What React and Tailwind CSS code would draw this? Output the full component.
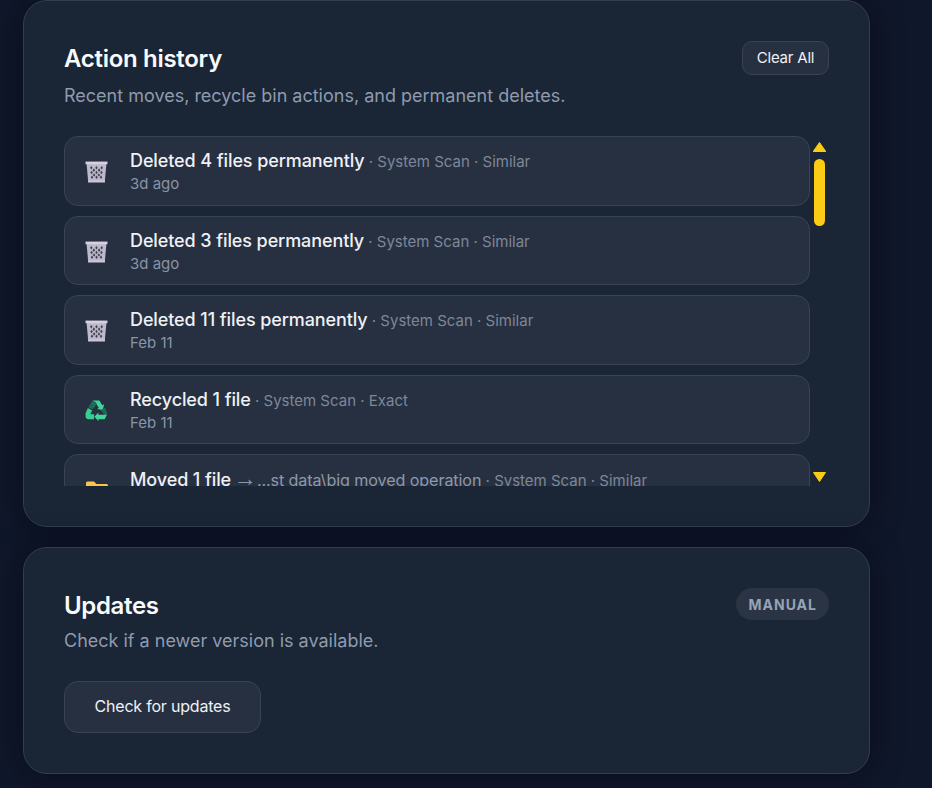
const font = { fontFamily: "Inter, 'Noto Sans', sans-serif" };

function Trash() {
  const holes = [[6, 7.5], [11, 7.5], [16, 7.5], [6.3, 12], [11, 12], [15.7, 12], [6.7, 16.5], [11, 16.5], [15.3, 16.5], [8.5, 9.7], [13.5, 9.7], [8.7, 14.3], [13.3, 14.3]];
  return (
    <svg width="23" height="23" viewBox="0 0 22 22" className="mt-[2px] mr-[1px] shrink-0">
      <path d="M1.500 3.500H20.500L19 20H3z" fill="#bdb8ca" />
      {holes.map(([x, y]) => (
        <path key={`${x}-${y}`} d={`M${x} ${y - 1.7}L${x + 1.2} ${y}L${x} ${y + 1.7}L${x - 1.2} ${y}z`} fill="#454254" />
      ))}
      <path d="M0.500 1.500H21.500V4H0.500z" fill="#d6d1e0" />
      <path d="M2.800 19.500H19.200L19 21.500H3z" fill="#cdc8d8" />
    </svg>
  );
}

function Recycle() {
  return (
    <svg width="23" height="23" viewBox="0 0 24 24" className="mt-[3px] mr-[1px] shrink-0">
      <path d="M8 1.500H15L18 6.500L20 5.500L18.500 11.500L12.500 10.500L14.500 9.500L11.500 4.500Z" fill="#3fd69a" />
      <path d="M8 1.500L11.500 3.500L12 5.500L8 11L3.500 8.500Z" fill="#1f6b5a" />
      <path d="M3 9.500L7.500 12L5.500 16H9.500V21H3.500Q1.500 21 0.700 19L0.500 15Z" fill="#37cf91" />
      <path d="M16.500 11.500L21 9L23.300 15.500L22 16.500H20Z" fill="#1f6b5a" />
      <path d="M14 16.500H23L20.500 21H14V23L9.800 18.500L14 14Z" fill="#3fd69a" />
    </svg>
  );
}

function Folder() {
  return (
    <svg width="24" height="24" viewBox="0 0 24 24" className="shrink-0">
      <path d="M1 6q0-1.500 1.500-1.500h6.500l2.500 2.500h10q1.500 0 1.500 1.500V20q0 1.500-1.500 1.500h-19Q1 21.500 1 20z" fill="#fcc44d" />
    </svg>
  );
}

function Row({ icon, title, extra, meta, when }) {
  return (
    <div className="flex h-[69.5px] shrink-0 items-center gap-[21px] rounded-[14px] border border-[#3a4354] bg-[#273040] pl-[20px] pr-4">
      {icon}
      <div className="min-w-0 pt-[1.5px]">
        <div className="whitespace-nowrap text-[18px] leading-[24px] font-medium tracking-[-0.1px] text-[#eef1f6]">
          {title}
          {extra && (
            <span className="text-[16.150px] font-normal text-[#8e98a9]">
              {" "}
              <span className="-ml-[2px] -mr-[4px] font-['Liberation_Sans'] text-[23px] leading-none">→</span> {extra}
            </span>
          )}
          <span className="text-[15px] font-normal tracking-[0px] text-[#7d8798]"> · {meta}</span>
        </div>
        <div className="text-[15px] leading-[20px] text-[#8994a7]">{when}</div>
      </div>
    </div>
  );
}

export default function App() {
  return (
    <div style={font} className="h-[788px] w-[932px] overflow-hidden bg-[#0f172a] pl-[23px]">
      <div className="flex w-[847px] flex-col gap-5">
        <section className="h-[527px] rounded-[24px] border border-[#333d4d] bg-[#1a2535] px-10 pt-10 shadow-[0_0_30px_rgba(5,8,18,0.55)]">
          <div className="flex items-start justify-between">
            <div>
              <h2 className="text-[24px] leading-[36px] font-semibold tracking-[-0.3px] text-[#f8fafc]">Action history</h2>
              <p className="mt-[6px] text-[18px] leading-[26px] text-[#8f9bae]">Recent moves, recycle bin actions, and permanent deletes.</p>
            </div>
            <button className="h-[34px] w-[87px] rounded-[10px] border border-[#3a4354] bg-[#273040] pt-[1px] text-[15px] tracking-[-0.2px] text-[#eef1f6]">Clear All</button>
          </div>
          <div className="mt-[27px] flex h-[350px] gap-[3px]">
            <div className="flex w-[746px] flex-col gap-[10px] overflow-hidden">
              <Row icon={<Trash />} title="Deleted 4 files permanently" meta="System Scan · Similar" when="3d ago" />
              <Row icon={<Trash />} title="Deleted 3 files permanently" meta="System Scan · Similar" when="3d ago" />
              <Row icon={<Trash />} title="Deleted 11 files permanently" meta="System Scan · Similar" when="Feb 11" />
              <Row icon={<Recycle />} title="Recycled 1 file" meta="System Scan · Exact" when="Feb 11" />
              <Row icon={<Folder />} title="Moved 1 file" extra="...st data\big moved operation" meta="System Scan · Similar" when="Feb 11" />
            </div>
            <div className="flex w-[13px] flex-col items-center">
              <svg width="13" height="10" viewBox="0 0 13 10" className="mt-[6px]"><path d="M6.500 0.500L12.800 9.500H0.200z" fill="#facc15" stroke="#facc15" strokeLinejoin="round" /></svg>
              <div className="mt-[7px] h-[67px] w-[11px] rounded-full bg-[#facc15]" />
              <div className="flex-1" />
              <svg width="13" height="10" viewBox="0 0 13 10" className="mb-[4px]"><path d="M0.500 0.500H12.500L6.500 9.500z" fill="#facc15" stroke="#facc15" strokeLinejoin="round" /></svg>
            </div>
          </div>
        </section>
        <section className="h-[227px] rounded-[24px] border border-[#333d4d] bg-[#1a2535] px-10 pt-10 shadow-[0_0_30px_rgba(5,8,18,0.55)]">
          <div className="flex items-start justify-between">
            <div>
              <h2 className="text-[24px] leading-[36px] font-semibold tracking-[-0.35px] text-[#f8fafc]">Updates</h2>
              <p className="mt-[4px] text-[18px] leading-[26px] text-[#8f9bae]">Check if a newer version is available.</p>
            </div>
            <span className="flex h-[32px] items-center rounded-full bg-[#2b3444] px-3 text-[14px] font-bold tracking-[1px] text-[#97a3b6]">MANUAL</span>
          </div>
          <button className="mt-[27px] h-[52px] w-[197px] rounded-[14px] border border-[#3a4354] bg-[#273040] pb-[2px] text-[16px] tracking-[-0.2px] text-[#eef1f6]">Check for updates</button>
        </section>
      </div>
    </div>
  );
}
